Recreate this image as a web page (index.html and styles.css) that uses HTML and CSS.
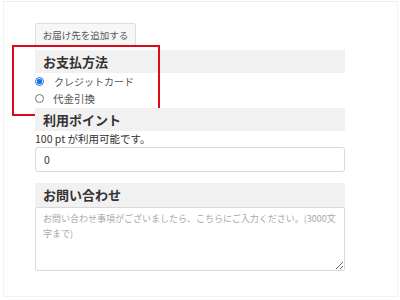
FILE: index.html
```html
<!DOCTYPE html>
<html lang="ja">
<head>
    <meta charset="UTF-8">
    <title>ご注文手続き</title>
    <link rel="stylesheet" href="styles.css">
</head>
<body>
    <div class="frame">
        <div class="order-form">
            <button type="button" class="add-address">お届け先を追加する</button>

            <!-- 支払方法 -->
            <section class="block payment">
                <h3 class="block-title">お支払方法</h3>
                <label class="radio-row">
                    <input type="radio" name="payment" checked>
                    <span class="card">クレジットカード</span>
                </label>
                <label class="radio-row">
                    <input type="radio" name="payment">
                    <span>代金引換</span>
                </label>
                <div class="highlight"></div>
            </section>

            <!-- ポイント -->
            <section class="block">
                <h3 class="block-title">利用ポイント</h3>
                <p class="note">100 pt が利用可能です。</p>
                <input type="text" class="text-input" value="0">
            </section>

            <!-- お問い合わせ -->
            <section class="block inquiry">
                <h3 class="block-title">お問い合わせ</h3>
                <textarea class="text-area" placeholder="お問い合わせ事項がございましたら、こちらにご入力ください。(3000文字まで)"></textarea>
            </section>
        </div>
    </div>
</body>
</html>
```

FILE: styles.css
```css
* {
    margin: 0;
    padding: 0;
    box-sizing: border-box;
}

:root {
    --text-primary: #333333;
    --text-muted: #555555;
    --placeholder: #a8a8a8;
    --heading-bg: #f1f1f1;
    --border-color: #d9d9d9;
    --accent: #1a73e8;
    --annotation: #dd0a17;
}

body {
    font-family: "Noto Sans CJK JP", "Noto Sans", sans-serif;
    color: var(--text-primary);
    background: #ffffff;
    width: 400px;
    height: 300px;
    overflow: hidden;
}

/* faint outer frame of the page capture */
.frame {
    margin: 1px 2px 0 3px;
    height: 296px;
    border: 1px solid #f2f2f2;
    border-top-color: #eeeeee;
}

.order-form {
    width: 310px;
    margin-left: 31px;
    padding-top: 21px;
}

.add-address {
    display: block;
    width: 101px;
    height: 23px;
    font-family: inherit;
    font-size: 9.5px;
    color: var(--text-muted);
    background: #f7f7f7;
    border: 1px solid #dedede;
    border-radius: 2px;
}

.block {
    position: relative;
}

.block-title {
    height: 23px;
    padding-left: 8px;
    font-size: 13px;
    font-weight: 700;
    line-height: 23px;
    background: var(--heading-bg);
}

.payment {
    margin-top: 4px;
    padding-bottom: 1px;
}

.radio-row {
    display: flex;
    align-items: center;
    height: 17px;
    font-size: 10.5px;
    color: var(--text-muted);
}

.radio-row input {
    width: 9px;
    height: 9px;
    margin: 0 9px 0 0;
    accent-color: var(--accent);
}

.card {
    font-size: 10px;
    margin-left: 1px;
}

/* annotation box drawn over the payment section */
.highlight {
    position: absolute;
    left: -23px;
    top: -5px;
    width: 148px;
    height: 71px;
    border: 2px solid var(--annotation);
    pointer-events: none;
}

.note {
    font-size: 10.5px;
    line-height: 15px;
}

.text-input {
    display: block;
    width: 310px;
    height: 25px;
    margin-top: 1px;
    padding: 0 8px;
    font-family: inherit;
    font-size: 10.5px;
    color: var(--text-primary);
    border: 1px solid var(--border-color);
    border-radius: 3px;
}

.inquiry {
    margin-top: 11px;
}

.inquiry .block-title {
    height: 24px;
    line-height: 24px;
}

.text-area {
    display: block;
    width: 310px;
    height: 64px;
    padding: 3px 7px;
    font-family: inherit;
    font-size: 9px;
    line-height: 15px;
    border: 1px solid var(--border-color);
    border-radius: 2px;
    resize: vertical;
}

.text-area::placeholder {
    color: var(--placeholder);
}
```
